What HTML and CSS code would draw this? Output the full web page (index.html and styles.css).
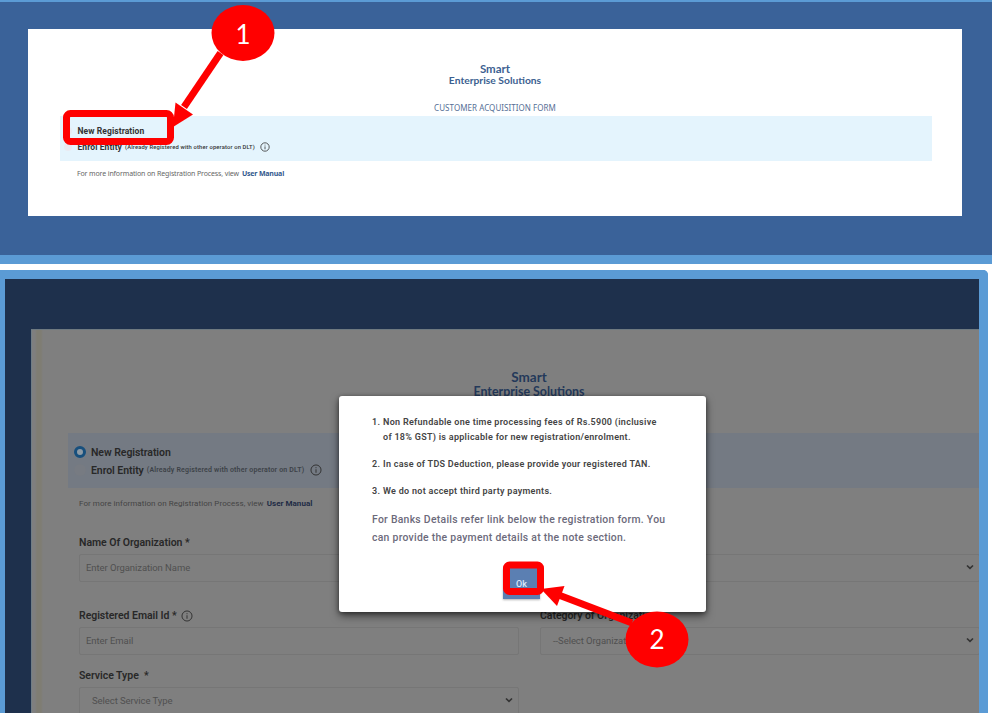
FILE: index.html
```
<!DOCTYPE html>
<html lang="en">
<head>
<meta charset="utf-8">
<title>Customer Acquisition Form</title>
<link rel="stylesheet" href="styles.css">
</head>
<body>
<main class="guide">
  <section class="step step-one">
    <div class="card">
      <header class="brand"><span class="brand-top"><span class="t">Smart</span></span><span class="brand-sub"><span class="t">Enterprise Solutions</span></span></header>
      <h1 class="form-title"><span class="t">CUSTOMER ACQUISITION FORM</span></h1>
      <div class="choices">
        <div class="choice"><i class="radio"></i><b class="t c1">New Registration</b></div>
        <div class="choice"><i class="radio"></i><b class="t c2">Enrol Entity</b><small class="t c3">(Already Registered with other operator on DLT)</small>
          <svg class="info" viewBox="0 0 10 10"><circle cx="5" cy="5" r="4.2"/><path d="M5 4.4V7.3M5 2.7V3.5"/></svg></div>
      </div>
      <p class="more"><span class="t m1">For more information on Registration Process, view</span><b class="t m2">User Manual</b></p>
    </div>
  </section>

  <section class="step step-two">
    <div class="page">
      <header class="brand"><span class="brand-top"><span class="t">Smart</span></span><span class="brand-sub"><span class="t">Enterprise Solutions</span></span></header>
      <div class="choices">
        <div class="choice"><i class="radio on"></i><b class="t c1">New Registration</b></div>
        <div class="choice"><i class="radio"></i><b class="t c2">Enrol Entity</b><small class="t c3">(Already Registered with other operator on DLT)</small>
          <svg class="info" viewBox="0 0 10 10"><circle cx="5" cy="5" r="4.2"/><path d="M5 4.4V7.3M5 2.7V3.5"/></svg></div>
      </div>
      <p class="more"><span class="t m1">For more information on Registration Process, view</span><b class="t m2">User Manual</b></p>
      <form class="fields">
        <div class="field">
          <div class="label"><span class="t l1">Name Of Organization *</span></div>
          <div class="control"><span class="t p1">Enter Organization Name</span></div>
        </div>
        <div class="field">
          <div class="label"></div>
          <div class="control select"><span></span><svg class="chev" viewBox="0 0 8 6"><path d="M1 1.5 4 4.3 7 1.5"/></svg></div>
        </div>
        <div class="field">
          <div class="label"><span class="t l2">Registered Email Id *</span><svg class="info" viewBox="0 0 10 10"><circle cx="5" cy="5" r="4.2"/><path d="M5 4.4V7.3M5 2.7V3.5"/></svg></div>
          <div class="control"><span class="t p2">Enter Email</span></div>
        </div>
        <div class="field">
          <div class="label"><span class="t l3">Category of Organization</span></div>
          <div class="control select"><span class="t p3">--Select Organization</span><svg class="chev" viewBox="0 0 8 6"><path d="M1 1.5 4 4.3 7 1.5"/></svg></div>
        </div>
        <div class="field third">
          <div class="label"><span class="t l4">Service Type &nbsp;*</span></div>
          <div class="control select"><span class="t p4">Select Service Type</span><svg class="chev" viewBox="0 0 8 6"><path d="M1 1.5 4 4.3 7 1.5"/></svg></div>
        </div>
      </form>
    </div>
  </section>
</main>

<div class="dialog">
  <ol class="terms">
    <li><span class="num">1.</span><div><span class="t d1">Non Refundable one time processing fees of Rs.5900 (inclusive</span><br><span class="t d2">of 18% GST) is applicable for new registration/enrolment.</span></div></li>
    <li><span class="num">2.</span><span class="t d3">In case of TDS Deduction, please provide your registered TAN.</span></li>
    <li><span class="num">3.</span><span class="t d4">We do not accept third party payments.</span></li>
  </ol>
  <p class="bank"><span class="t b1">For Banks Details refer link below the registration form. You</span><br><span class="t b2">can provide the payment details at the note section.</span></p>
  <button class="ok">Ok</button>
</div>

<svg class="callouts" viewBox="0 0 992 713">
  <g class="mark">
    <rect x="66.500" y="113.500" width="104" height="28" rx="4"/>
    <path d="M220.500 53 184 107"/>
    <rect x="506.500" y="565" width="34" height="26.500" rx="3"/>
    <path d="M632 623 560 595.500"/>
  </g>
  <g class="solid">
    <path d="M173 127 175.500 102.500 193 114.500Z"/>
    <path d="M541 589 564.500 586 557 606Z"/>
    <ellipse cx="243" cy="33" rx="31.500" ry="28"/>
    <ellipse cx="657" cy="639.500" rx="31.500" ry="28"/>
  </g>
  <text x="243" y="43.500">1</text>
  <text x="657" y="649">2</text>
</svg>
</body>
</html>
```
FILE: styles.css
```
* { box-sizing: border-box; }
body { margin: 0; background: #fff; font-family: Roboto, sans-serif; color: #333; }
p, h1, ol { margin: 0; padding: 0; font-weight: 400; }
.guide { height: 713px; overflow: hidden; display: flex; flex-direction: column; gap: 6px; }
.t { white-space: nowrap; }

.step-one { flex: none; height: 264px; background: #3a6299; border-top: 2px solid #5b9bd5; border-bottom: 9px solid #5b9bd5; padding: 27px 30px 0 28px; }
.card { height: 187px; background: #fff; padding: 33px 30px 0 32px; }
.brand { font-family: Lato, sans-serif; font-weight: 700; color: #3d5f91; display: flex; flex-direction: column; align-items: center; }
.card .brand { margin-right: 2px; }
.card .brand-top { font-size: 11.5px; line-height: 13px; }
.card .brand-sub { font-size: 10.300px; line-height: 11px; }
.form-title { font: 8px/12px "Noto Sans", sans-serif; color: #566f96; text-align: center; margin: 16px 2px 0 0; letter-spacing: .05px; }
.choices { background: #e4f4fd; }
.choice { display: flex; align-items: center; }
.info { fill: none; stroke: #333; stroke-width: .8; }
.radio { border-radius: 50%; background: #e9eaf2; flex: none; }
.card .choices { height: 45px; margin-top: 2px; padding-top: 7px; }
.card .choice { height: 16px; padding-left: 4px; }
.card .radio { width: 8px; height: 8px; margin-right: 5.500px; }
.card b { font-size: 8.500px; letter-spacing: .08px; }
.card .c3 { font-size: 5.800px; font-weight: 500; margin-left: 3px; letter-spacing: .15px; }
.card .info { width: 10px; height: 10px; margin-left: 5px; }
.card .more { font: 7px/12px "Noto Sans", sans-serif; color: #666; padding: 7px 0 0 17px; display: flex; gap: 3px; letter-spacing: -.13px; }
.card .more b { font-size: 7px; color: #31588d; letter-spacing: -.18px; }

.step-two { flex: none; width: 988px; height: 450px; background: #1e304c; border: 0 solid #5b9bd5; border-width: 9px 9px 0 5px; border-radius: 0 5px 0 0; padding: 50px 0 0 26px; }
.page { height: 391px; background: linear-gradient(90deg, #7f7f7f 3px, #7f7d73 5px, #7f7d73 9px, #7f7f7f 11px); border-top: 1px solid #6e7980; border-left: 1px solid #707d86; padding: 40px 0 0 36px; color: #282828; overflow: hidden; }
.page .brand { color: #24395a; margin-right: -29px; width: 922px; }
.page .brand-top { font-size: 13.500px; line-height: 15px; }
.page .brand-sub { font-size: 12.400px; line-height: 13px; }
.page .choices { height: 55px; width: 911px; background: #747a83; margin-top: 35px; padding-top: 10px; }
.page .choice { height: 18px; padding-left: 6px; }
.page .radio { width: 12px; height: 12px; margin-right: 5px; background: #777b82; }
.page .radio.on { border: 3px solid #174f7d; background: #8d9aa5; }
.page .choice b { font-size: 10.500px; font-weight: 600; letter-spacing: -.06px; }
.page .c3 { font-size: 7px; font-weight: 600; margin-left: 3px; color: #3d4248; letter-spacing: .18px; }
.page .info { width: 12px; height: 12px; margin-left: 6px; stroke: #303030; }
.page .label .info { margin-left: 4px; }
.page .more { font-size: 8px; line-height: 12px; height: 12px; margin: 10px 0 0 11px; color: #444; display: flex; gap: 3px; letter-spacing: .04px; }
.page .more .m1 { letter-spacing: .06px; }
.page .more b { color: #1e2b45; }
.fields { display: grid; grid-template-columns: 440px 440px; column-gap: 21px; margin: 22px 0 0 11px; grid-template-rows: 73px 60px 60px; }
.label { height: 22px; line-height: 20px; font-size: 10.500px; font-weight: 600; display: flex; align-items: center; letter-spacing: -.04px; }
.control { height: 28px; border: 1px solid #767676; border-radius: 2px; padding: 0 5px 2px 6px; font-size: 9.500px; color: #505050; display: flex; align-items: center; justify-content: space-between; letter-spacing: -.07px; }
.field:nth-child(4) .control, .third .control { padding-left: 12px; }
.chev { width: 8px; height: 6px; fill: none; stroke: #333; stroke-width: 1.700; }

.dialog { position: absolute; left: 339px; top: 396px; width: 367px; height: 216px; background: #fff; border-radius: 3px; box-shadow: 0 4px 9px rgba(0,0,0,.5), 0 1px 4px rgba(0,0,0,.4); padding: 19px 0 0 33px; }
.terms { list-style: none; font-size: 9px; font-weight: 600; line-height: 15px; color: #444; display: grid; row-gap: 12px; letter-spacing: .29px; }
.terms li { display: flex; }
.num { width: 11px; flex: none; }
.bank { font-size: 10.400px; line-height: 17.500px; font-weight: 500; color: #6c6a7b; margin-top: 12px; letter-spacing: .28px; }
.ok { display: block; width: 37px; height: 31px; margin: 22px 0 0 131px; padding: 0; background: #5b7fb2; border: 0; color: #dce8fa; font: 500 9px Roboto, sans-serif; box-shadow: 0 1px 2px rgba(0,0,0,.3); }

.callouts { position: absolute; left: 0; top: 0; width: 992px; height: 713px; pointer-events: none; }
.mark { fill: none; stroke: #f00; stroke-width: 7; }
.solid { fill: #f00; }
.callouts text { fill: #fff; font: 26px Lato, sans-serif; text-anchor: middle; }
```
